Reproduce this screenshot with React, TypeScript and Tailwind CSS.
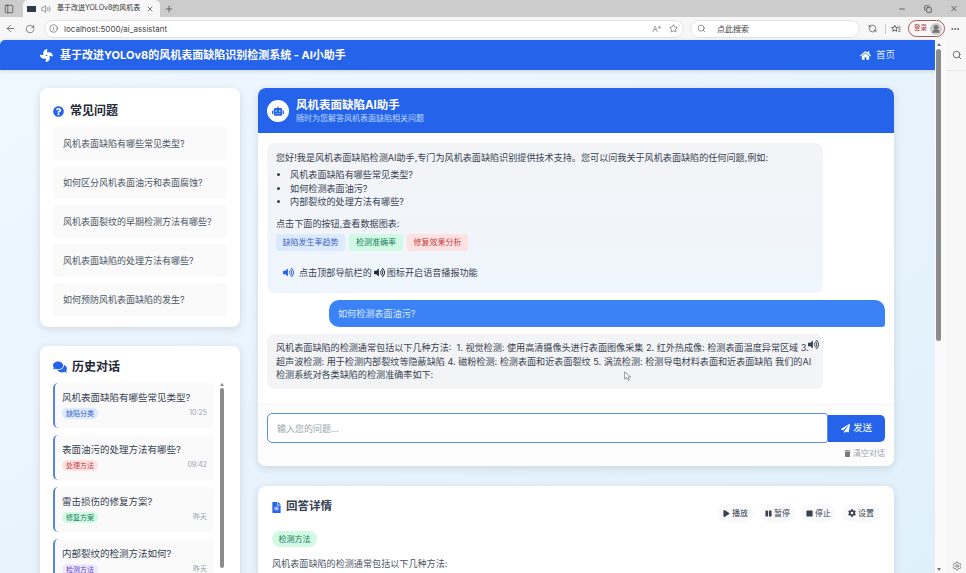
import { ArrowLeft, Ellipsis, Info, Minus, PanelLeft, Plus, RotateCw, Search, Settings, Star, UserRound, Volume2, X, Copy, RefreshCcw } from "lucide-react";
import {
  FaCog,
  FaComments,
  FaFan,
  FaFileAlt,
  FaHome,
  FaPaperPlane,
  FaPause,
  FaPlay,
  FaQuestionCircle,
  FaRobot,
  FaStop,
  FaTrash,
  FaVolumeUp,
} from "react-icons/fa";

const faqs = [
  "风机表面缺陷有哪些常见类型?",
  "如何区分风机表面油污和表面腐蚀?",
  "风机表面裂纹的早期检测方法有哪些?",
  "风机表面缺陷的处理方法有哪些?",
  "如何预防风机表面缺陷的发生?",
];

const history = [
  { q: "风机表面缺陷有哪些常见类型?", tag: "缺陷分类", tagClass: "bg-[#dbeafe] text-[#3b5fc0]", time: "10:25" },
  { q: "表面油污的处理方法有哪些?", tag: "处理方法", tagClass: "bg-[#fee2e2] text-[#c24141]", time: "09:42" },
  { q: "雷击损伤的修复方案?", tag: "修复方案", tagClass: "bg-[#d1fae5] text-[#16795a]", time: "昨天" },
  { q: "内部裂纹的检测方法如何?", tag: "检测方法", tagClass: "bg-[#ede9fe] text-[#6d3fc4]", time: "昨天" },
];

function BrowserChrome() {
  return (
    <>
      <div className="flex h-[17px] items-center bg-[#cccccc] text-[#333]">
        <PanelLeft className="ml-[4px] h-[10px] w-[10px]" strokeWidth={1.5} />
        <div className="ml-[9px] flex h-[17px] w-[137px] items-center rounded-t-[5px] bg-[#f7f7f7] pl-[4px]">
          <div className="h-[6px] w-[9px] bg-[#2f3b4c]" />
          <Volume2 className="ml-[5px] h-[10px] w-[10px]" strokeWidth={1.2} />
          <span className="ml-[6px] w-[84px] overflow-hidden whitespace-nowrap text-[7px]">基于改进YOLOv8的风机表</span>
          <X className="ml-[5px] h-[8px] w-[8px]" />
        </div>
        <Plus className="ml-[4px] h-[10px] w-[10px]" strokeWidth={1.5} />
        <div className="ml-auto flex items-center gap-[16px] pr-[7px]">
          <Minus className="h-[8px] w-[10px]" />
          <Copy className="h-[8px] w-[10px]" />
          <X className="h-[9px] w-[10px]" />
        </div>
      </div>
      <div className="flex h-[23px] items-center bg-[#f7f7f7] text-[#444]">
        <ArrowLeft className="ml-[5px] h-[11px] w-[11px]" strokeWidth={1.5} />
        <RotateCw className="ml-[9px] h-[10px] w-[10px]" strokeWidth={1.5} />
        <div className="ml-[9px] flex h-[18px] w-[640px] items-center rounded-full border border-[#e3e3e3] bg-white pl-[3px] pr-[5px]">
          <Info className="ml-[1px] h-[9px] w-[9px]" strokeWidth={1.5} />
          <span className="ml-[6px] text-[8px]">localhost:5000/ai_assistant</span>
          <span className="ml-auto text-[8px] text-[#888]">Aᵃ</span>
          <Star className="ml-[8px] h-[9px] w-[9px]" strokeWidth={1.5} />
        </div>
        <div className="ml-[6px] flex h-[18px] w-[170px] items-center rounded-full border border-[#e3e3e3] bg-white pl-[6px]">
          <Search className="h-[9px] w-[9px]" strokeWidth={1.5} />
          <span className="ml-[11px] text-[8px]">点此搜索</span>
        </div>
        <RefreshCcw className="ml-[8px] h-[9px] w-[9px]" strokeWidth={1.8} />
        <div className="ml-[8px] h-[10px] w-px bg-[#ccc]" />
        <svg viewBox="0 0 24 24" fill="none" stroke="currentColor" strokeWidth="2" className="ml-[5px] h-[10px] w-[10px]">
          <path d="M9 3l2.2 5 5.3.5-4 3.6 1.2 5.4L9 14.8 4.300 17.500l1.200-5.400-4-3.600 5.300-.5z" />
          <path d="M17 7h6M18 12h5M17 17h6" />
        </svg>
        <div className="ml-[7px] flex h-[17px] w-[37px] items-center justify-between rounded-full border border-[#a05a5a] pl-[5px] pr-[2px]">
          <span className="text-[6.5px] text-[#b03a3a]">登录</span>
          <span className="flex h-[12px] w-[12px] items-center justify-center rounded-full bg-[#ccc]">
            <UserRound className="h-[10px] w-[10px] text-[#777]" fill="#777" />
          </span>
        </div>
        <Ellipsis className="ml-[5px] h-[10px] w-[10px]" />
      </div>
    </>
  );
}

function Sidebar() {
  return (
    <aside className="flex w-[200px] shrink-0 flex-col gap-[19px]">
      <section className="shrink-0 rounded-[8px] bg-white px-[13px] pb-[11px] pt-[14px] shadow-[0_2px_8px_rgba(0,0,0,0.12)]">
        <h2 className="flex h-[18px] items-center gap-[6px] text-[12px] font-bold text-[#1f2937]">
          <FaQuestionCircle className="h-[11px] w-[11px] text-[#2563eb]" />
          常见问题
        </h2>
        <ul className="mt-[7px] flex flex-col gap-[6px]">
          {faqs.map((q) => (
            <li key={q} className="flex h-[33px] items-center rounded-[5px] bg-[#fafafa] px-[10px] text-[9px] text-[#4b5563]">
              {q}
            </li>
          ))}
        </ul>
      </section>

      <section className="h-[240px] shrink-0 overflow-hidden rounded-t-[8px] bg-white px-[13px] pt-[12px] shadow-[0_2px_8px_rgba(0,0,0,0.12)]">
        <h2 className="flex h-[18px] items-center gap-[5px] text-[12px] font-bold text-[#1f2937]">
          <FaComments className="h-[14px] w-[14px] text-[#2563eb]" />
          历史对话
        </h2>
        <div className="mt-[7px] flex gap-[6px]">
          <div className="flex w-[161px] shrink-0 flex-col gap-[7px]">
            {history.map((h) => (
              <div key={h.q} className="h-[45px] shrink-0 rounded-[5px] border-l-2 border-[#5b84d6] bg-[#fafafa] pl-[7px] pr-[7px] pt-[8px]">
                <p className="text-[9.5px] leading-[14px] text-[#374151]">{h.q}</p>
                <div className="mt-[3px] flex items-center justify-between">
                  <span className={`rounded-[5px] px-[4px] text-[7px] leading-[11px] ${h.tagClass}`}>{h.tag}</span>
                  <span className="text-[7px] text-[#9ca3af]">{h.time}</span>
                </div>
              </div>
            ))}
          </div>
          <div className="flex w-[4px] flex-col items-center">
            <div className="h-0 w-0 border-x-[2px] border-b-[3px] border-x-transparent border-b-[#888]" />
            <div className="mt-[2px] h-[180px] w-[4px] rounded-full bg-[#8c8c8c]" />
          </div>
        </div>
      </section>
    </aside>
  );
}

function ChatCard() {
  return (
    <section className="relative h-[378px] shrink-0 overflow-hidden rounded-[8px] bg-white shadow-[0_2px_8px_rgba(0,0,0,0.12)]">
      <header className="flex h-[45px] items-center bg-[#2563eb] pl-[9px] text-white">
        <div className="flex h-[22px] w-[22px] items-center justify-center rounded-full bg-white">
          <FaRobot className="h-[12px] w-[12px] text-[#2563eb]" />
        </div>
        <div className="ml-[7px]">
          <h1 className="text-[11.5px] font-bold leading-[15px]">风机表面缺陷AI助手</h1>
          <p className="text-[8px] leading-[11px] text-[#bfdbfe]">随时为您解答风机表面缺陷相关问题</p>
        </div>
      </header>

      <div className="flex h-[271px] flex-col gap-[7px] px-[9px] pt-[10px] text-[9.1px] text-[#374151]">
        <div className="h-[150px] w-[556px] shrink-0 rounded-[8px] bg-gradient-to-b from-[#f3f4f6] to-[#f0f6fe] px-[9px] pt-[8px]">
          <p className="leading-[13px]">您好!我是风机表面缺陷检测AI助手,专门为风机表面缺陷识别提供技术支持。您可以问我关于风机表面缺陷的任何问题,例如:</p>
          <ul className="mt-[4px] list-inside list-disc pl-[1px] leading-[13.5px]">
            <li>风机表面缺陷有哪些常见类型?</li>
            <li>如何检测表面油污?</li>
            <li>内部裂纹的处理方法有哪些?</li>
          </ul>
          <p className="mt-[8px] leading-[13px]">点击下面的按钮,查看数据图表:</p>
          <div className="mt-[4px] flex gap-[4px] text-[8px]">
            <span className="flex h-[17px] w-[69px] items-center justify-center rounded-[3px] bg-[#dbeafe] text-[#3b5fc0]">缺陷发生率趋势</span>
            <span className="flex h-[17px] w-[54px] items-center justify-center rounded-[3px] bg-[#d1fae5] text-[#16795a]">检测准确率</span>
            <span className="flex h-[17px] w-[61px] items-center justify-center rounded-[3px] bg-[#fee2e2] text-[#c24141]">修复效果分析</span>
          </div>
          <p className="mt-[15px] flex items-center pl-[7px] leading-[13px]">
            <FaVolumeUp className="h-[11px] w-[11px] text-[#2563eb]" />
            <span className="ml-[5px]">点击顶部导航栏的</span>
            <FaVolumeUp className="mx-[2px] h-[11px] w-[11px] text-[#1f2937]" />
            <span>图标开启语音播报功能</span>
          </p>
        </div>

        <div className="flex h-[27px] w-[556px] shrink-0 items-center self-end rounded-[10px] rounded-br-[3px] bg-[#3b82f6] px-[9px] text-[#dbeafe]">
          如何检测表面油污?
        </div>

        <div className="relative h-[55px] w-[556px] shrink-0 rounded-[8px] bg-[#f3f4f6] pl-[9px] pr-[6px] pt-[7px] leading-[13.5px]">
          <p>
            风机表面缺陷的检测通常包括以下几种方法: &nbsp;1. 视觉检测: 使用高清摄像头进行表面图像采集 2. 红外热成像: 检测表面温度异常区域 3.
            超声波检测: 用于检测内部裂纹等隐蔽缺陷 4. 磁粉检测: 检测表面和近表面裂纹 5. 涡流检测: 检测导电材料表面和近表面缺陷 我们的AI
            检测系统对各类缺陷的检测准确率如下:
          </p>
          <FaVolumeUp className="absolute right-[4px] top-[5px] h-[11px] w-[11px] text-[#374151]" />
        </div>
      </div>

      <div className="h-[62px] border-t border-[#f5f5f5] bg-[#fdfdfd] px-[9px] pt-[8px]">
        <div className="flex h-[30px] items-center">
          <input
            readOnly
            placeholder="输入您的问题..."
            className="h-[30px] min-w-0 flex-1 rounded-l-[5px] rounded-r-[3px] border border-[#5b8fd6] bg-white px-[9px] text-[9px] outline-none placeholder:text-[#9ca3af]"
          />
          <button className="flex h-[27px] w-[57px] items-center justify-center gap-[3px] rounded-r-[5px] bg-[#2563eb] text-[9.5px] text-white">
            <FaPaperPlane className="h-[9px] w-[9px]" />
            发送
          </button>
        </div>
        <div className="mt-[4px] flex items-center justify-end gap-[2px] text-[8px] text-[#9ca3af]">
          <FaTrash className="h-[7px] w-[7px] text-[#777]" />
          清空对话
        </div>
      </div>

      {/* mouse pointer caught in the screenshot */}
      <svg viewBox="0 0 12 16" className="absolute left-[366px] top-[283px] h-[11px] w-[8px]" fill="#fff" stroke="#666" strokeWidth="1">
        <path d="M1 1v11l3-2.500 2 4.500 2-1-2-4.300h4z" />
      </svg>
    </section>
  );
}

function DetailCard() {
  const controls = [
    { label: "播放", icon: <FaPlay className="h-[7px] w-[7px]" />, w: "w-[35px]" },
    { label: "暂停", icon: <FaPause className="h-[7px] w-[7px]" />, w: "w-[35px]" },
    { label: "停止", icon: <FaStop className="h-[7px] w-[7px]" />, w: "w-[33px]" },
    { label: "设置", icon: <FaCog className="h-[8px] w-[8px]" />, w: "w-[38px]" },
  ];
  return (
    <section className="h-[100px] shrink-0 rounded-t-[8px] bg-white pl-[14px] pr-[14px] pt-[12px] shadow-[0_2px_8px_rgba(0,0,0,0.12)]">
      <div className="flex h-[24px] items-start justify-between">
        <h2 className="flex h-[18px] items-center gap-[5px] text-[11.5px] font-bold text-[#374151]">
          <FaFileAlt className="h-[11px] w-[9px] text-[#2563eb]" />
          回答详情
        </h2>
        <div className="flex gap-[7px] pt-[6px]">
          {controls.map((c) => (
            <button key={c.label} className={`flex h-[18px] items-center justify-center gap-[2px] rounded-full bg-[#f9f9f9] text-[8px] text-[#374151] ${c.w}`}>
              {c.icon}
              {c.label}
            </button>
          ))}
        </div>
      </div>
      <span className="mt-[9px] flex h-[16px] w-[45px] items-center justify-center rounded-full bg-[#d1fae5] text-[8px] text-[#16795a]">检测方法</span>
      <p className="mt-[10px] text-[9.1px] leading-[14px] text-[#4b5563]">风机表面缺陷的检测通常包括以下几种方法:</p>
    </section>
  );
}

export default function App() {
  return (
    <div className="flex h-[573px] w-[966px] flex-col overflow-hidden bg-white font-['Inter','Noto_Sans_CJK_SC',sans-serif]">
      <BrowserChrome />
      <div className="flex min-h-0 flex-1">
        <main className="flex w-[935px] shrink-0 flex-col bg-gradient-to-br from-[#f0f8ff] to-[#e0f0fb]">
          <nav className="flex h-[30px] shrink-0 items-center rounded-tl-[5px] bg-[#2563eb] pl-[40px] pr-[40px] text-white shadow-[0_1px_4px_rgba(0,0,0,0.15)]">
            <FaFan className="h-[13px] w-[13px]" />
            <span className="ml-[7px] text-[11px] font-bold">基于改进YOLOv8的风机表面缺陷识别检测系统 - AI小助手</span>
            <span className="ml-auto flex items-center gap-[5px] text-[9.5px] text-[#dbeafe]">
              <FaHome className="h-[11px] w-[11px] text-white" />
              首页
            </span>
          </nav>
          <div className="flex min-h-0 flex-1 gap-[18px] pl-[40px] pt-[18px]">
            <Sidebar />
            <div className="flex w-[636px] shrink-0 flex-col gap-[20px]">
              <ChatCard />
              <DetailCard />
            </div>
          </div>
        </main>

        <div className="flex w-[12px] shrink-0 flex-col items-start bg-[#fafafa] pl-[1px] pt-[3px]">
          <div className="ml-[1px] h-0 w-0 border-x-[2px] border-b-[3px] border-x-transparent border-b-[#777]" />
          <div className="mt-[3px] h-[292px] w-[5px] rounded-full bg-[#8c8c8c]" />
          <div className="ml-[1px] mt-auto mb-[2px] h-0 w-0 border-x-[2px] border-t-[3px] border-x-transparent border-t-[#777]" />
        </div>

        <div className="flex w-[19px] shrink-0 flex-col items-center bg-[#f7f7f7] text-[#555]">
          <div className="flex h-[31px] w-full items-center justify-center border-b border-[#e8e8e8]">
            <Search className="h-[10px] w-[10px]" strokeWidth={2} />
          </div>
          <Settings className="mt-auto mb-[2px] h-[10px] w-[10px]" strokeWidth={1.5} />
        </div>
      </div>
    </div>
  );
}
